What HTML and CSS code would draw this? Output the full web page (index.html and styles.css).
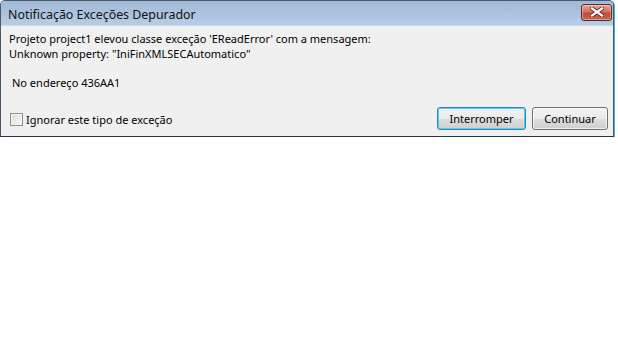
FILE: index.html
```html
<!DOCTYPE html>
<html lang="pt">
<head>
    <meta charset="UTF-8">
    <title>Notificação Exceções Depurador</title>
    <link rel="stylesheet" href="styles.css">
</head>
<body>
    <div class="window">
        <div class="titlebar">
            <span class="title">Notificação Exceções Depurador</span>
            <button class="close-btn" aria-label="Fechar">
                <svg width="14" height="10" viewBox="0 0 14 10">
                    <path d="M2 1.5 L12 8.5 M12 1.5 L2 8.5" stroke="#5a2420" stroke-width="4" stroke-linecap="square"/>
                    <path d="M2 1.5 L12 8.5 M12 1.5 L2 8.5" stroke="#f6f6f6" stroke-width="2.4" stroke-linecap="square"/>
                </svg>
            </button>
        </div>
        <div class="content">
            <p class="msg">Projeto project1 elevou classe exceção 'EReadError' com a mensagem:<br>Unknown property: "IniFinXMLSECAutomatico"</p>
            <p class="addr">No endereço 436AA1</p>
            <div class="footer">
                <label class="check">
                    <span class="box"></span>
                    Ignorar este tipo de exceção
                </label>
                <div class="buttons">
                    <button class="btn default">Interromper</button>
                    <button class="btn">Continuar</button>
                </div>
            </div>
        </div>
    </div>
</body>
</html>
```

FILE: styles.css
```css
body {
    margin: 0;
    background: #ffffff;
    font-family: 'Noto Sans', 'Open Sans', sans-serif;
    font-size: 11px;
    color: #000;
}

.window {
    width: 612px;
    height: 135px;
    border: 1px solid #4a5a6c;
    border-bottom-color: #2a3440;
    border-radius: 5px 5px 0 0;
    background: #f0f0f0;
    box-shadow: 1px 1px 0 #3fb0e0;
    display: flex;
    flex-direction: column;
    overflow: hidden;
}

.titlebar {
    height: 24px;
    flex-shrink: 0;
    display: flex;
    align-items: center;
    justify-content: space-between;
    padding: 0 1px 0 7px;
    background: linear-gradient(#a2b9d4, #b6cde8);
    border-bottom: 1px solid #c9d9ec;
}

.title {
    font-size: 12.4px;
    color: #111;
    margin-top: 2px;
}

.close-btn {
    width: 31px;
    height: 17px;
    margin-top: -2px;
    padding: 0;
    border: 1px solid #5a2a24;
    border-radius: 3px;
    background: linear-gradient(#e7a69a 0%, #d2705f 45%, #c04b36 55%, #cb6a52 100%);
    display: flex;
    align-items: center;
    justify-content: center;
    box-shadow: inset 0 0 0 1px rgba(255,255,255,0.35);
}

.content {
    flex: 1;
    display: flex;
    flex-direction: column;
    padding: 5px 8px 6px 8px;
}

.msg {
    margin: 0;
    line-height: 15px;
}

.addr {
    margin: 14px 0 0 3px;
    line-height: 15px;
}

.footer {
    margin-top: auto;
    display: flex;
    align-items: center;
    justify-content: space-between;
}

.check {
    display: flex;
    align-items: center;
    gap: 3px;
    margin-left: 1px;
    margin-top: 1px;
}

.box {
    width: 11px;
    height: 11px;
    border: 1px solid #8f8f8f;
    background: linear-gradient(135deg, #dcdcdc, #f8f8f8);
    box-shadow: inset 0 0 0 1px #f4f4f4;
}

.buttons {
    display: flex;
    gap: 6px;
    margin-right: -3px;
}

.btn {
    height: 23px;
    font-family: inherit;
    font-size: 11px;
    color: #000;
    border: 1px solid #707070;
    border-radius: 3px;
    background: linear-gradient(#f2f2f2 0%, #ebebeb 50%, #dddddd 51%, #cfcfcf 100%);
    box-shadow: inset 0 0 0 1px rgba(255,255,255,0.7);
    padding: 0 10px;
    min-width: 76px;
}

.btn.default {
    width: 89px;
    border-color: #3c7fb1;
    box-shadow: inset 0 0 0 1px #48d3fb;
}
```
